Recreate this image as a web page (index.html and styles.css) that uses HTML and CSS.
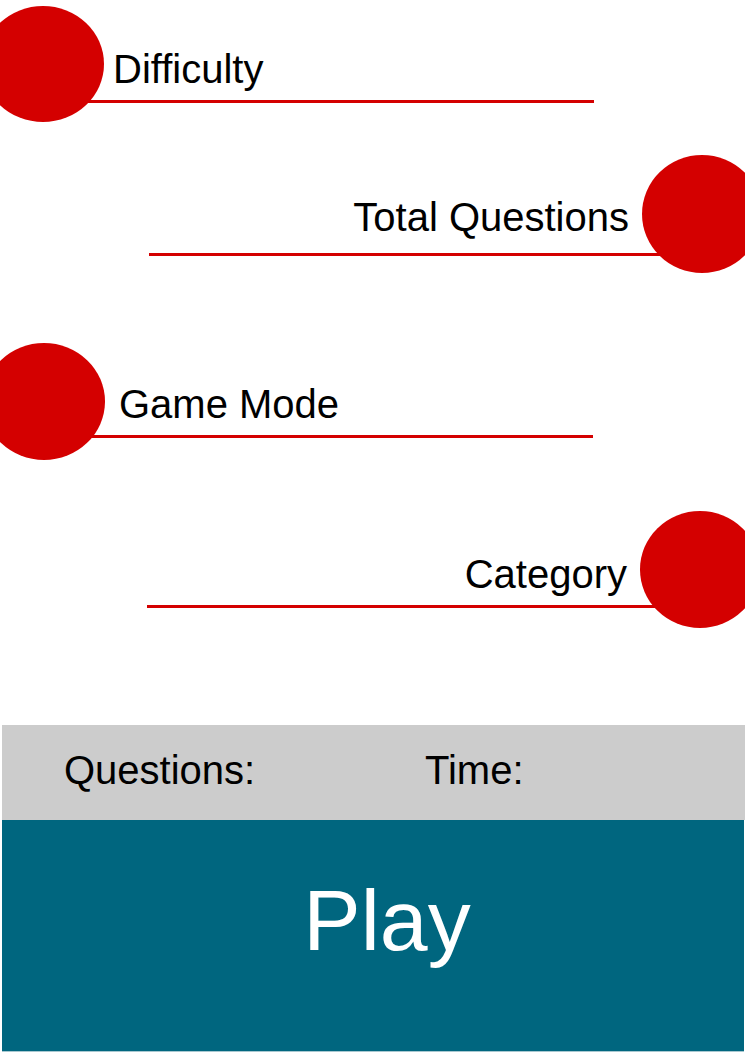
FILE: index.html
```html
<!DOCTYPE html>
<html>
<head>
<meta charset="utf-8">
<link rel="stylesheet" href="styles.css">
</head>
<body>
<div class="page">
  <div class="options">
    <div class="opt opt-1">
      <span class="dot dot-1"></span>
      <div class="opt-line">Difficulty</div>
    </div>
    <div class="opt opt-2">
      <span class="dot dot-2"></span>
      <div class="opt-line">Total Questions</div>
    </div>
    <div class="opt opt-3">
      <span class="dot dot-3"></span>
      <div class="opt-line">Game Mode</div>
    </div>
    <div class="opt opt-4">
      <span class="dot dot-4"></span>
      <div class="opt-line">Category</div>
    </div>
  </div>
  <div class="stats">
    <span class="stat stat-q">Questions:</span>
    <span class="stat">Time:</span>
  </div>
  <div class="play">Play</div>
</div>
</body>
</html>
```

FILE: styles.css
```css
html, body {
  margin: 0;
  padding: 0;
  background: #ffffff;
}

.page {
  width: 745px;
  height: 1053px;
  overflow: hidden;
  font-family: "Liberation Sans", Arial, sans-serif;
  color: #000000;
}

.options {
  height: 725px;
  padding-top: 47px;
  box-sizing: border-box;
}

.opt {
  position: relative;
}

.opt-line {
  font-size: 40px;
  line-height: 44px;
  border-bottom: 3px solid #d40000;
  box-sizing: border-box;
}

.opt-1 .opt-line {
  margin-left: 40px;
  width: 554px;
  padding-left: 73px;
  padding-bottom: 9px;
}

.opt-2 {
  margin-top: 92px;
}

.opt-2 .opt-line {
  margin-left: 149px;
  width: 551px;
  text-align: right;
  padding-right: 71px;
  padding-bottom: 14px;
}

.opt-3 {
  margin-top: 126px;
}

.opt-3 .opt-line {
  margin-left: 40px;
  width: 553px;
  padding-left: 79px;
  padding-bottom: 9px;
}

.opt-4 {
  margin-top: 114px;
}

.opt-4 .opt-line {
  margin-left: 147px;
  width: 553px;
  text-align: right;
  padding-right: 73px;
  padding-bottom: 9px;
}

.dot {
  position: absolute;
  z-index: 1;
  background: #d40000;
  border-radius: 50%;
}

.dot-1 {
  top: -41px;
  left: -18px;
  width: 122px;
  height: 116px;
}

.dot-2 {
  top: -40px;
  left: 642px;
  width: 120px;
  height: 118px;
}

.dot-3 {
  top: -39px;
  left: -17px;
  width: 122px;
  height: 117px;
}

.dot-4 {
  top: -41px;
  left: 640px;
  width: 120px;
  height: 117px;
}

.stats {
  margin-left: 2px;
  height: 95px;
  background: #cccccc;
  display: flex;
  align-items: flex-start;
  padding: 23px 0 0 62px;
  box-sizing: border-box;
  font-size: 40px;
  line-height: 44px;
}

.stat-q {
  width: 361px;
}

.play {
  margin-left: 2px;
  width: 742px;
  height: 232px;
  background: #00667f;
  border-bottom: 1px solid #a8c8d0;
  box-sizing: border-box;
  color: #ffffff;
  font-size: 86px;
  line-height: 100px;
  text-align: center;
  padding: 50px 0 0 28px;
}
```
